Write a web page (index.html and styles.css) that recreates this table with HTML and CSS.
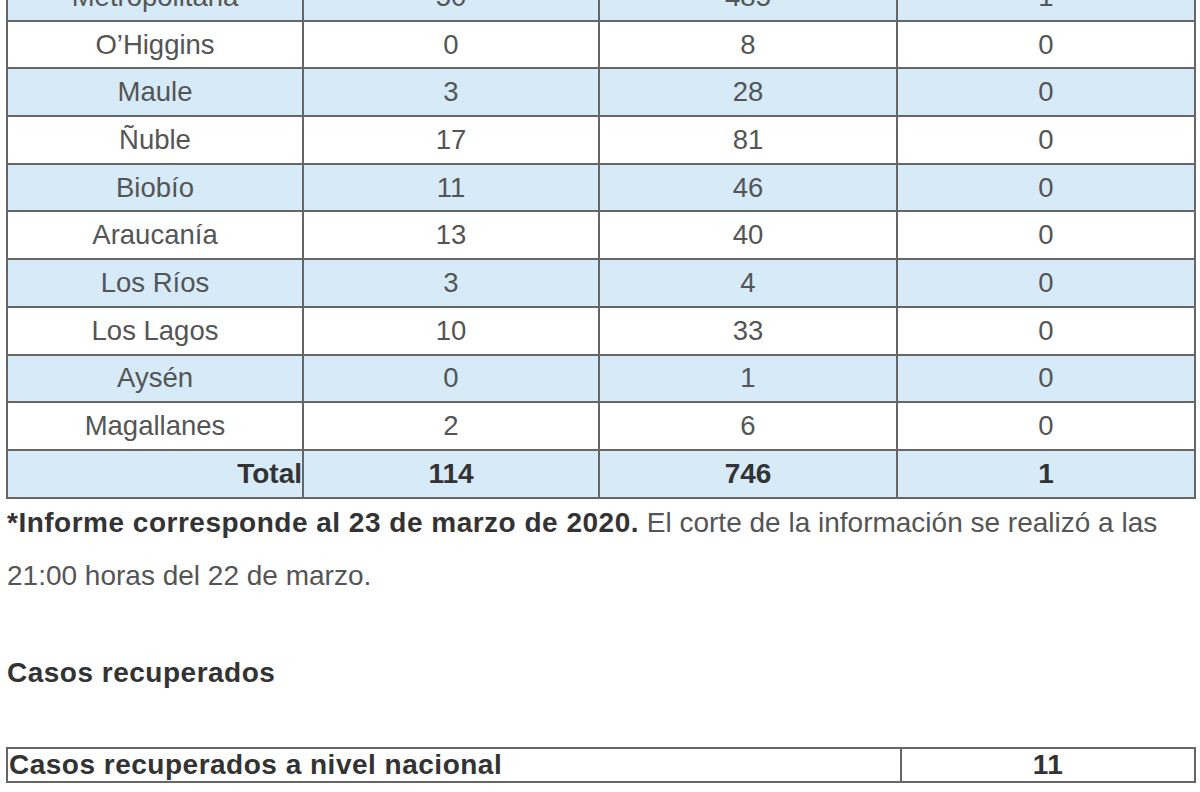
FILE: index.html
```html
<!DOCTYPE html>
<html lang="es">
<head>
<meta charset="utf-8">
<title>Casos COVID-19 por región</title>
<link rel="stylesheet" href="styles.css">
</head>
<body>
<main class="page">
  <table class="regions">
    <colgroup><col class="c1"><col class="c2"><col class="c3"><col class="c4"></colgroup>
    <tbody>
      <tr class="alt"><td>Metropolitana</td><td>50</td><td>485</td><td>1</td></tr>
      <tr><td>O’Higgins</td><td>0</td><td>8</td><td>0</td></tr>
      <tr class="alt"><td>Maule</td><td>3</td><td>28</td><td>0</td></tr>
      <tr><td>Ñuble</td><td>17</td><td>81</td><td>0</td></tr>
      <tr class="alt"><td>Biobío</td><td>11</td><td>46</td><td>0</td></tr>
      <tr><td>Araucanía</td><td>13</td><td>40</td><td>0</td></tr>
      <tr class="alt"><td>Los Ríos</td><td>3</td><td>4</td><td>0</td></tr>
      <tr><td>Los Lagos</td><td>10</td><td>33</td><td>0</td></tr>
      <tr class="alt"><td>Aysén</td><td>0</td><td>1</td><td>0</td></tr>
      <tr><td>Magallanes</td><td>2</td><td>6</td><td>0</td></tr>
      <tr class="alt total"><td class="label">Total</td><td>114</td><td>746</td><td>1</td></tr>
    </tbody>
  </table>
  <p class="note"><strong>*Informe corresponde al 23 de marzo de 2020.</strong> El corte de la información se realizó a las 21:00 horas del 22 de marzo.</p>
  <p class="heading"><strong>Casos recuperados</strong></p>
  <table class="recovered">
    <colgroup><col class="r1"><col class="r2"></colgroup>
    <tbody>
      <tr><td class="rlabel">Casos recuperados a nivel nacional</td><td class="rval">11</td></tr>
    </tbody>
  </table>
</main>
</body>
</html>
```

FILE: styles.css
```css
html, body {
  margin: 0;
  padding: 0;
  background: #ffffff;
}
body {
  font-family: "Liberation Sans", Arial, sans-serif;
  color: #555555;
  font-size: 28px;
  overflow: hidden;
}
.page {
  padding-left: 6px;
  width: 1190px;
}
strong {
  font-weight: bold;
  color: #333333;
  letter-spacing: 0.5px;
}
.regions {
  margin-top: -28px;
  width: 1190px;
  border-collapse: collapse;
  table-layout: fixed;
  border: 2px solid #666666;
}
.regions .c1 { width: 296px; }
.regions .c2 { width: 296px; }
.regions .c3 { width: 298px; }
.regions td {
  border: 2px solid #666666;
  height: 45.7px;
  padding: 0;
  text-align: center;
  vertical-align: middle;
  font-size: 27.5px;
  line-height: 30px;
}
.regions tr.alt td {
  background: #d6eaf8;
}
.regions tr.total td {
  font-weight: bold;
  color: #333333;
  font-size: 28px;
}
.regions tr.total td.label {
  text-align: right;
}
.note {
  margin: -3px 0 44px;
  padding-left: 1px;
  line-height: 53px;
}
.heading {
  margin: 0 0 48px;
  padding-left: 1px;
  line-height: 53px;
}
.recovered {
  width: 1190px;
  border-collapse: collapse;
  table-layout: fixed;
  border: 2px solid #666666;
}
.recovered .r1 { width: 894px; }
.recovered td {
  border: 2px solid #666666;
  height: 32px;
  padding: 0 1px;
  font-size: 28px;
  line-height: 32px;
  font-weight: bold;
  color: #333333;
  letter-spacing: 0.5px;
}
.recovered .rval {
  text-align: center;
}
```
